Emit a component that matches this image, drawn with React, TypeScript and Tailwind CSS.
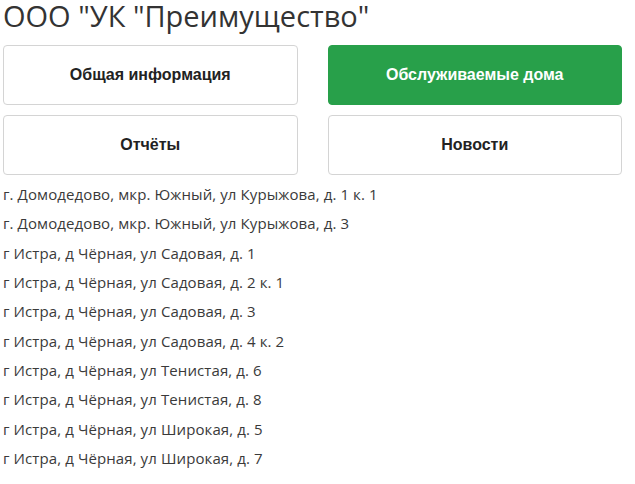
import React from "react";

const addresses = [
  "г. Домодедово, мкр. Южный, ул Курыжова, д. 1 к. 1",
  "г. Домодедово, мкр. Южный, ул Курыжова, д. 3",
  "г Истра, д Чёрная, ул Садовая, д. 1",
  "г Истра, д Чёрная, ул Садовая, д. 2 к. 1",
  "г Истра, д Чёрная, ул Садовая, д. 3",
  "г Истра, д Чёрная, ул Садовая, д. 4 к. 2",
  "г Истра, д Чёрная, ул Тенистая, д. 6",
  "г Истра, д Чёрная, ул Тенистая, д. 8",
  "г Истра, д Чёрная, ул Широкая, д. 5",
  "г Истра, д Чёрная, ул Широкая, д. 7",
];

function Btn({ label, active }: { label: string; active?: boolean }) {
  return (
    <button
      className={
        active
          ? "h-[60px] rounded-[4px] bg-[#28a04a] border border-[#28a04a] text-white font-bold text-[16px] font-['Liberation_Sans',sans-serif]"
          : "h-[60px] rounded-[4px] bg-white border border-[#d4d4d4] text-[#222] font-bold text-[16px] font-['Liberation_Sans',sans-serif]"
      }
    >
      {label}
    </button>
  );
}

export default function App() {
  return (
    <div className="w-[635px] h-[484px] bg-white overflow-hidden pl-[3px] pr-[13px] font-['Open_Sans',sans-serif] text-[#333]">
      <h1 className="text-[29px] leading-[32px] text-[#333] font-normal">ООО "УК "Преимущество"</h1>
      <div className="grid grid-cols-2 gap-x-[30px] gap-y-[10px] mt-[13px]">
        <Btn label="Общая информация" />
        <Btn label="Обслуживаемые дома" active />
        <Btn label="Отчёты" />
        <Btn label="Новости" />
      </div>
      <div className="mt-[5px] flex flex-col">
        {addresses.map((a) => (
          <div key={a} className="text-[15px] leading-[29.33px] tracking-[0.1px] text-[#3a3a3a]">
            {a}
          </div>
        ))}
      </div>
    </div>
  );
}
